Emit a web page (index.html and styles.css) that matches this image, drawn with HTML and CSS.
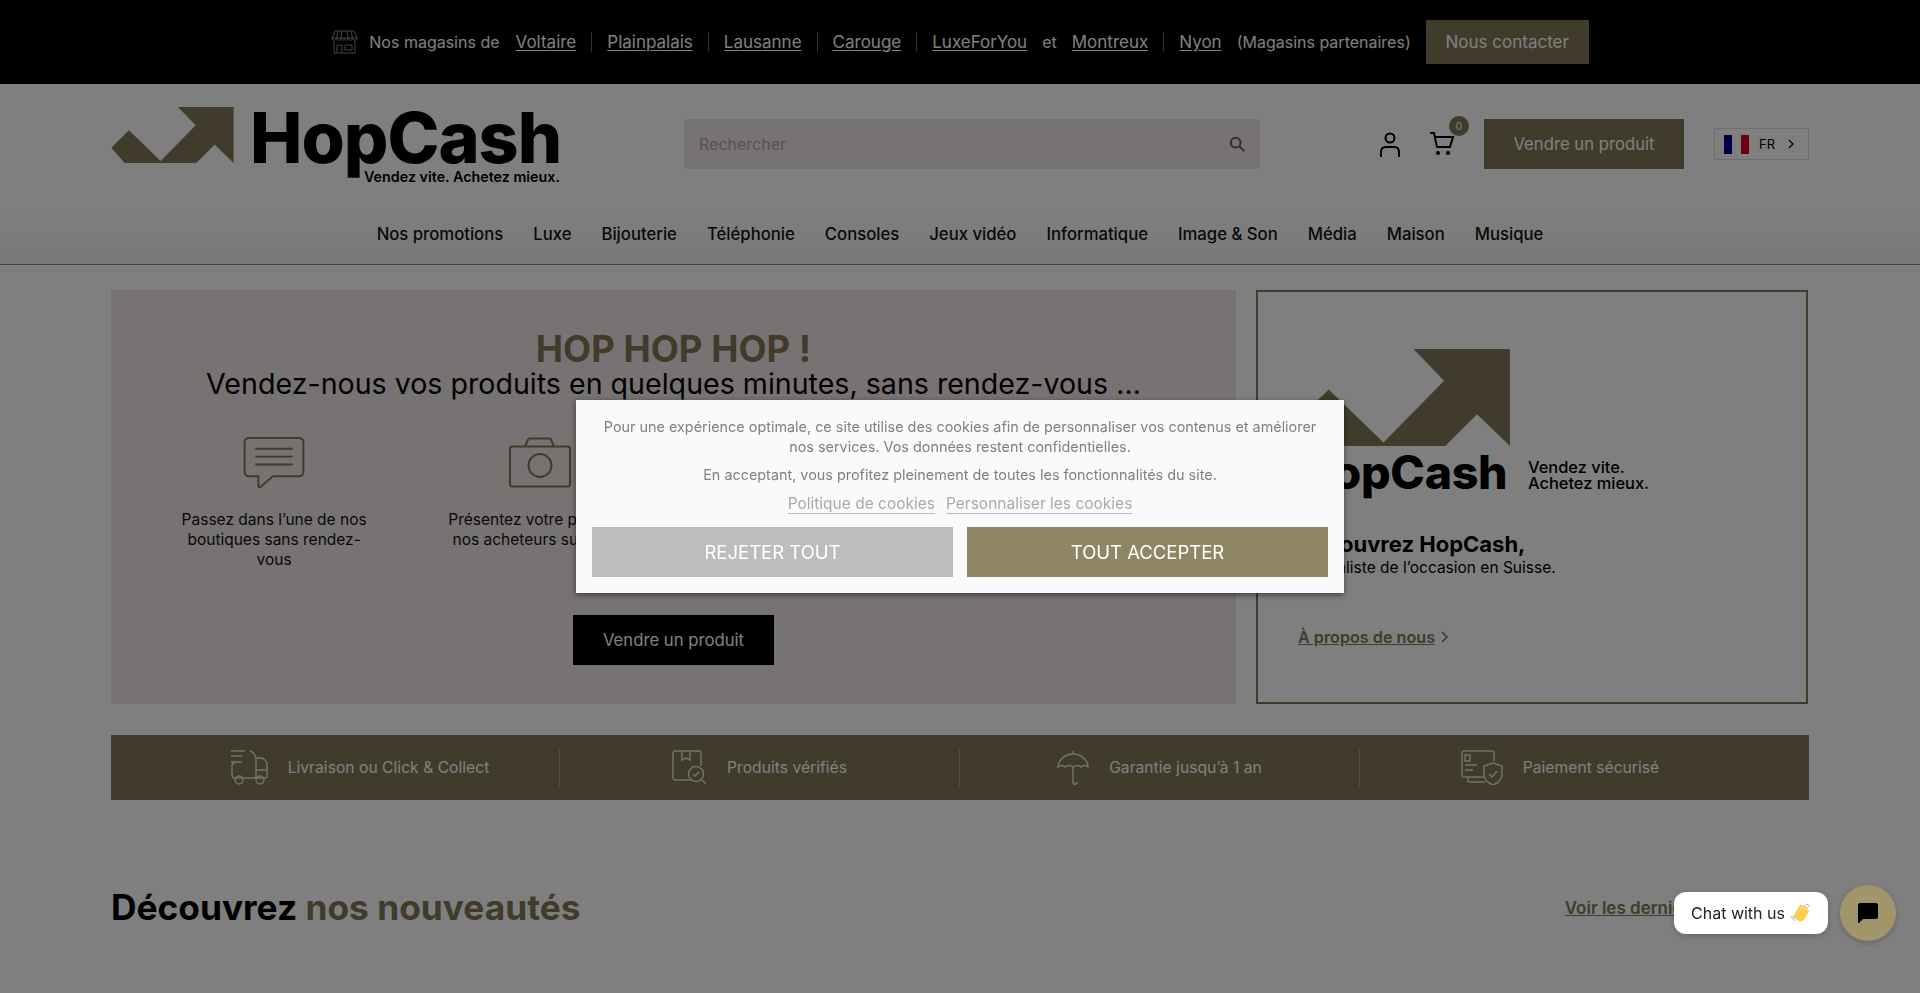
FILE: index.html
```html
<!DOCTYPE html>
<html lang="fr">
<head>
	<meta charset="utf-8" />
	<title>HopCash</title>
	<link rel="stylesheet" href="styles.css">
</head>
<body>
	<div class="topbar">
		<svg class="store-icon" viewBox="0 0 27 24" fill="none" stroke="#8a8a7c" stroke-width="1"><path d="M4 1h19l3 7H1zM7 1 5.500 8M11 1l-1 7M16 1l1 7M20 1l1.500 7M1 8c0 3 4.500 3 4.500 0 0 3 4.500 3 4.500 0 0 3 3.500 3 3.500 0 0 3 3.500 3 3.500 0 0 3 4.500 3 4.500 0 0 3 4.500 3 4.500 0M3 11v12h21V11M6 23v-8h5v8M14 15h7v5h-7z"/></svg>
		<span class="topbar-text topbar-intro">Nos magasins de</span>
		<a class="store-link" href="#">Voltaire</a>
		<i class="topbar-sep"></i>
		<a class="store-link" href="#">Plainpalais</a>
		<i class="topbar-sep"></i>
		<a class="store-link" href="#">Lausanne</a>
		<i class="topbar-sep"></i>
		<a class="store-link" href="#">Carouge</a>
		<i class="topbar-sep"></i>
		<a class="store-link" href="#">LuxeForYou</a>
		<span class="topbar-text">et</span>
		<a class="store-link" href="#">Montreux</a>
		<i class="topbar-sep"></i>
		<a class="store-link" href="#">Nyon</a>
		<span class="topbar-text">(Magasins partenaires)</span>
		<a class="btn btn-contact" href="#">Nous contacter</a>
	</div>

	<header class="header">
		<a class="logo" href="#">
			<svg class="logo-arrow" viewBox="35 50 367 168"><path d="M235 50H402V218L345 163 290 218H75L35 172 88 120 183 212 288 105Z"/></svg>
			<span class="logo-name">HopCash</span>
			<span class="logo-tag">Vendez vite. Achetez mieux.</span>
		</a>
		<div class="search">
			<span class="search-text">Rechercher</span>
			<svg class="search-icon" viewBox="0 0 18 18" fill="none" stroke="#5c5c5c" stroke-width="2.200"><circle cx="7.500" cy="7.500" r="5.500"/><path d="m12 12 5 5"/></svg>
		</div>
		<div class="header-right">
			<svg class="user-icon" viewBox="0 0 20 25" fill="none" stroke="#000" stroke-width="2"><circle cx="10" cy="6" r="4.500"/><path d="M1 25v-5c0-3 2-5 5-5h8c3 0 5 2 5 5v5"/></svg>
			<div class="cart">
				<svg class="cart-icon" viewBox="0 0 26 23" fill="none" stroke="#000" stroke-width="2"><path d="M1 1h4l3 14h13l3-10H6"/><circle cx="9" cy="21" r="1" fill="#000"/><circle cx="19" cy="21" r="1" fill="#000"/></svg>
				<span class="cart-badge">0</span>
			</div>
			<a class="btn btn-sell" href="#">Vendre un produit</a>
			<div class="lang">
				<span class="flag"><i class="flag-blue"></i><i class="flag-white"></i><i class="flag-red"></i></span>
				<span class="lang-code">FR</span>
				<svg class="lang-arrow" viewBox="0 0 6 10" fill="none" stroke="#000" stroke-width="1.200"><path d="m1 1 4 4-4 4"/></svg>
			</div>
		</div>
	</header>

	<nav class="nav">
		<a href="#">Nos promotions</a>
		<a href="#">Luxe</a>
		<a href="#">Bijouterie</a>
		<a href="#">Téléphonie</a>
		<a href="#">Consoles</a>
		<a href="#">Jeux vidéo</a>
		<a href="#">Informatique</a>
		<a href="#">Image &amp; Son</a>
		<a href="#">Média</a>
		<a href="#">Maison</a>
		<a href="#">Musique</a>
	</nav>

	<main class="page">
		<section class="intro">
			<div class="hero">
				<h1 class="hero-title">HOP HOP HOP !</h1>
				<p class="hero-sub">Vendez-nous vos produits en quelques minutes, sans rendez-vous ...</p>
				<div class="steps">
					<div class="step">
						<svg class="step-icon" viewBox="0 0 62 52" fill="none" stroke="#827656" stroke-width="2"><path d="M5 1h52c2 0 4 2 4 4v31c0 2-2 4-4 4H30L17 51c-1 .500-2 0-2-1v-10H5c-2 0-4-2-4-4V5c0-2 2-4 4-4z"/><path d="M12 12h38M12 20h38M12 28h38"/></svg>
						<p>Passez dans l’une de nos boutiques sans rendez-vous</p>
					</div>
					<div class="step">
						<svg class="step-icon" viewBox="0 0 62 50" fill="none" stroke="#827656" stroke-width="2"><path d="M3 9h56c1 0 2 1 2 2v36c0 1-1 2-2 2H3c-1 0-2-1-2-2V11c0-1 1-2 2-2zM16 9l3-7c.300-.500 1-1 1.500-1h20c.500 0 1.200.500 1.500 1l3 7"/><circle cx="31" cy="28" r="11.500"/></svg>
						<p>Présentez votre produit à nos acheteurs sur place</p>
					</div>
				</div>
				<a class="btn btn-black" href="#">Vendre un produit</a>
			</div>
			<aside class="about">
				<svg class="about-arrow" viewBox="35 50 367 168"><path d="M235 50H402V218L345 163 290 218H75L35 172 88 120 183 212 288 105Z"/></svg>
				<div class="about-logo">
					<span class="about-name">HopCash</span>
					<span class="about-tag">Vendez vite.<br>Achetez mieux.</span>
				</div>
				<h2 class="about-title">Découvrez HopCash,</h2>
				<p class="about-text">spécialiste de l’occasion en Suisse.</p>
				<a class="about-link" href="#"><u>À propos de nous</u>
					<svg class="link-arrow" viewBox="0 0 7 12" fill="none" stroke="#827656" stroke-width="1.600"><path d="m1 1 5 5-5 5"/></svg>
				</a>
			</aside>
		</section>

		<section class="perks">
			<div class="perk">
				<svg class="perk-truck" viewBox="0 0 38 35" fill="none" stroke="#e6e6dc" stroke-width="1.400"><path d="M1 1h14M1 6h11M1 12h11M5 12c-2 1-3 2-3 4v9c0 2 1 3 3 3h21M20 1c3 1 5 3 6 7v20h9c1 0 2-1 2-2V15c0-4-3-7-7-7h-4M26 20h11"/><circle cx="9" cy="30" r="4"/><circle cx="30" cy="30" r="4"/></svg>
				<span>Livraison ou Click &amp; Collect</span>
			</div>
			<div class="perk">
				<svg class="perk-box" viewBox="0 0 35 35" fill="none" stroke="#e6e6dc" stroke-width="1.400"><path d="M20 30H3c-1 0-2-1-2-2V3c0-1 1-2 2-2h24c1 0 2 1 2 2v13M10 1v9l4-2 4 2V1"/><circle cx="24" cy="24" r="7.500"/><path d="m21 24 2 2 4-4M29.500 29.500 34 34"/></svg>
				<span>Produits vérifiés</span>
			</div>
			<div class="perk">
				<svg class="perk-umbrella" viewBox="0 0 32 35" fill="none" stroke="#e6e6dc" stroke-width="1.400"><path d="M16 1v3M1 17C1 10 8 4 16 4s15 6 15 13c-2-2-5-2-7 0-2-2-6-2-8 0-2-2-6-2-8 0-2-2-5-2-7 0zM16 17v15c0 3 4 3 4 0"/></svg>
				<span>Garantie jusqu’à 1 an</span>
			</div>
			<div class="perk">
				<svg class="perk-card" viewBox="0 0 42 35" fill="none" stroke="#e6e6dc" stroke-width="1.400"><path d="M24 27H3c-1 0-2-1-2-2V3c0-1 1-2 2-2h28c1 0 2 1 2 2v8M4 5h5v6H4zM4 15h12M4 20h8M7 27v4c0 1 1 1 2 1h15"/><path d="M32 13l9 3v8c0 6-4 9-9 11-5-2-9-5-9-11v-8z"/><path d="m28 24 3 3 5-6"/></svg>
				<span>Paiement sécurisé</span>
			</div>
		</section>

		<section class="news-head">
			<h2 class="news-title">Découvrez <span>nos nouveautés</span></h2>
			<a class="news-link" href="#">Voir les dernières nouveautés</a>
		</section>
	</main>

	<div class="overlay"></div>

	<div class="cookie">
		<p>Pour une expérience optimale, ce site utilise des cookies afin de personnaliser vos contenus et améliorer nos services. Vos données restent confidentielles.</p>
		<p class="cookie-second">En acceptant, vous profitez pleinement de toutes les fonctionnalités du site.</p>
		<div class="cookie-links">
			<a href="#">Politique de cookies</a>
			<a href="#">Personnaliser les cookies</a>
		</div>
		<div class="cookie-btns">
			<a class="cookie-btn cookie-reject" href="#">REJETER TOUT</a>
			<a class="cookie-btn cookie-accept" href="#">TOUT ACCEPTER</a>
		</div>
	</div>

	<div class="chat">
		<div class="chat-bubble">Chat with us
			<svg class="wave" viewBox="0 0 20 20">
				<g fill="#ffcc4d" transform="rotate(32 10 10)">
					<rect x="5" y="8" width="11" height="10" rx="4.500"/>
					<rect x="5" y="2.500" width="2.700" height="10" rx="1.350"/>
					<rect x="7.900" y="1" width="2.700" height="10" rx="1.350"/>
					<rect x="10.800" y="1.500" width="2.700" height="10" rx="1.350"/>
					<rect x="13.500" y="3.500" width="2.500" height="10" rx="1.250"/>
				</g>
				<path fill="none" stroke="#5dadec" stroke-width=".900" d="M15 1c1.500.200 3 1.500 3.500 3M.500 13c.300 2 1.500 3.500 3.500 4.500M2 12.500c.200 1 .800 2 2 2.700"/>
			</svg>
		</div>
		<div class="chat-btn">
			<svg class="chat-icon" viewBox="0 0 20 20"><path d="M2 0h16c1 0 2 1 2 2v12c0 1-1 2-2 2H5l-4 4c-.500.400-1 .100-1-.500V2C0 1 1 0 2 0z"/></svg>
		</div>
	</div>
</body>
</html>
```
FILE: styles.css
```css
*{margin: 0;padding: 0;box-sizing: border-box;}
html,body{height: 100%;overflow: hidden;}
body{font-family: "Inter", "Liberation Sans", sans-serif;font-size: 16px;color: #000;background: #fff;}
a{color: inherit;text-decoration: none;}

/* top bar */
.topbar{
	height: 84px;
	background: #000;
	display: flex;
	align-items: center;
	justify-content: center;
	color: #fff;
	font-size: 16px;
}
.store-icon{width: 27px;height: 24px;margin-right: 11px;}
.topbar-text{color: #fff;margin: 0 15px;}
.topbar-intro{margin: 0 16px 0 0;}
.store-link{text-decoration: underline;text-underline-offset: 2px;font-size: 17px;}
.topbar-sep{width: 1px;height: 20px;background: #666;margin: 0 15px;}
.btn{
	display: flex;
	align-items: center;
	justify-content: center;
	background: #827656;
	color: #fff;
}
.btn-contact{width: 163px;height: 44px;font-size: 17px;}

/* header */
.header{
	height: 120px;
	padding: 0 111px;
	display: flex;
	align-items: center;
}
.logo{display: block;position: relative;width: 449px;height: 84px;flex: none;}
.logo-arrow{position: absolute;left: 0;top: 5px;width: 123px;height: 56px;fill: #827656;}
.logo-name{
	position: absolute;
	left: 139px;
	top: 6px;
	font-size: 70px;
	font-weight: 800;
	letter-spacing: -1px;
	line-height: 60px;
}
.logo-tag{
	position: absolute;
	right: 0;
	bottom: 0;
	font-size: 14.300px;
	font-weight: 600;
	line-height: 18px;
}
.search{
	width: 576px;
	height: 50px;
	margin-left: 124px;
	background: #efe6e4;
	border-radius: 4px;
	display: flex;
	align-items: center;
	padding-left: 15px;
	flex: none;
}
.search-text{flex: 1;color: #aaa8a6;font-size: 16px;}
.search-icon{
	width: 16px;
	box-sizing: content-box;
	padding-left: 10px;
	margin-right: 15px;
	border-left: 1px solid #ddd;
	height: 24px;
}
.header-right{margin-left: auto;display: flex;align-items: center;}
.user-icon{width: 20px;height: 25px;margin-right: 29px;}
.cart{position: relative;width: 55px;height: 24px;}
.cart-icon{width: 26px;height: 23px;}
.cart-badge{
	position: absolute;
	left: 20px;
	top: -16px;
	width: 20px;
	height: 20px;
	border-radius: 50%;
	background: #827656;
	color: #fff;
	font-size: 10px;
	text-align: center;
	line-height: 20px;
}
.btn-sell{width: 200px;height: 50px;font-size: 16.700px;}
.lang{
	width: 95px;
	height: 32px;
	margin-left: 30px;
	border: 1px solid #ddd;
	display: flex;
	align-items: center;
	padding-left: 9px;
	font-size: 13px;
}
.flag{display: flex;width: 25px;height: 19px;}
.flag i{flex: 1;}
.flag-blue{background: #00008f;}
.flag-white{background: #fff;}
.flag-red{background: #d6001c;}
.lang-code{margin-left: 10px;}
.lang-arrow{width: 6px;height: 10px;margin-left: 13px;}

/* main menu */
.nav{
	height: 61px;
	border-bottom: 1px solid #888;
	background: linear-gradient(#fff, #f2f2f2);
	display: flex;
	align-items: center;
	justify-content: center;
	gap: 30px;
	font-size: 16.700px;
	font-weight: 500;
	color: #111;
}

.page{padding: 25px 111px 0;}
.intro{display: flex;gap: 20px;height: 414px;}

/* hero */
.hero{
	width: 1125px;
	background: #efe6e4;
	padding: 39px 30px 0;
	display: flex;
	flex-direction: column;
	align-items: center;
}
.hero-title{font-size: 36.500px;font-weight: 700;color: #827656;line-height: 41px;}
.hero-sub{font-size: 28.600px;line-height: 28px;color: #000;}
.steps{
	display: grid;
	grid-template-columns: repeat(4, 1fr);
	width: 100%;
	margin-top: 39px;
	height: 128px;
}
.step{display: flex;flex-direction: column;align-items: center;text-align: center;}
.step-icon{width: 62px;height: 51px;}
.step p{width: 200px;margin-top: 22px;font-size: 15.500px;line-height: 20px;color: #111;}
.btn-black{width: 201px;height: 50px;margin-top: 50px;background: #000;font-size: 16.700px;}

/* about card */
.about{
	width: 552px;
	border: 2px solid #827656;
	padding: 57px 0 0 40px;
}
.about-arrow{display: block;width: 212px;height: 97px;fill: #827656;}
.about-logo{display: flex;align-items: center;height: 50px;margin-top: 4px;}
.about-name{
	font-size: 46.500px;
	font-weight: 800;
	letter-spacing: -.3px;
	line-height: 44px;
	margin-bottom: 6px;
	width: 230px;
	flex: none;
}
.about-tag{font-size: 16.400px;font-weight: 500;line-height: 16px;}
.about-title{font-size: 22px;font-weight: 700;line-height: 26px;margin-top: 31px;}
.about-text{font-size: 15.500px;line-height: 20px;margin-top: 1px;}
.about-link{
	display: flex;
	align-items: center;
	gap: 6px;
	margin-top: 49px;
	font-size: 16.200px;
	font-weight: 600;
	color: #827656;
}
.link-arrow{width: 7px;height: 12px;}

/* perks */
.perks{
	height: 65px;
	margin-top: 31px;
	padding: 0 49px;
	background: #827656;
	display: grid;
	grid-template-columns: repeat(4, 1fr);
	align-items: center;
	color: #fff;
	font-size: 15.700px;
}
.perk{
	height: 36px;
	display: flex;
	align-items: center;
	justify-content: center;
	gap: 20px;
	border-right: 1px solid #a8a089;
}
.perk:last-child{border-right: 0;}
.perk-truck{width: 38px;height: 35px;}
.perk-box{width: 35px;height: 35px;}
.perk-umbrella{width: 32px;height: 35px;}
.perk-card{width: 42px;height: 35px;}

/* section head */
.news-head{
	margin-top: 81px;
	display: flex;
	align-items: center;
	justify-content: space-between;
}
.news-title{font-size: 35.300px;font-weight: 700;line-height: 54px;}
.news-title span{color: #827656;}
.news-link{font-size: 17px;font-weight: 600;text-decoration: underline;color: #827656;}

/* cookie box and overlay */
.overlay{position: fixed;left: 0;top: 0;right: 0;bottom: 0;background: rgba(0,0,0,.5);}
.cookie{
	position: fixed;
	left: 576px;
	top: 400px;
	width: 768px;
	height: 193px;
	padding: 17px 16px 16px;
	background: #fafafa;
	box-shadow: 0 2px 6px rgba(0,0,0,.5);
	text-align: center;
	color: #808080;
	font-size: 14.400px;
	line-height: 20px;
}
.cookie-second{margin-top: 8px;}
.cookie-links{
	display: flex;
	justify-content: center;
	gap: 11px;
	margin-top: 10px;
	color: #aaa;
	font-size: 15.500px;
}
.cookie-links a{border-bottom: 1px solid #bbb;line-height: 18px;}
.cookie-btns{display: flex;gap: 14px;margin-top: 13px;}
.cookie-btn{
	flex: 1;
	height: 50px;
	display: flex;
	align-items: center;
	justify-content: center;
	color: #fff;
	font-size: 18.500px;
}
.cookie-reject{background: #bdbdbd;}
.cookie-accept{background: #8f8666;}

/* chat */
.chat{position: fixed;right: 24px;top: 885px;display: flex;align-items: center;gap: 12px;}
.chat-bubble{
	width: 154px;
	height: 42px;
	background: #fff;
	border-radius: 12px;
	box-shadow: 0 2px 6px rgba(0,0,0,.2);
	display: flex;
	align-items: center;
	justify-content: center;
	gap: 6px;
	font-size: 16px;
	color: #222;
}
.wave{width: 20px;height: 20px;}
.chat-btn{
	width: 56px;
	height: 56px;
	border-radius: 50%;
	background: #a3956a;
	box-shadow: 0 2px 6px rgba(0,0,0,.2);
	display: flex;
	align-items: center;
	justify-content: center;
}
.chat-icon{width: 20px;height: 20px;}
```
